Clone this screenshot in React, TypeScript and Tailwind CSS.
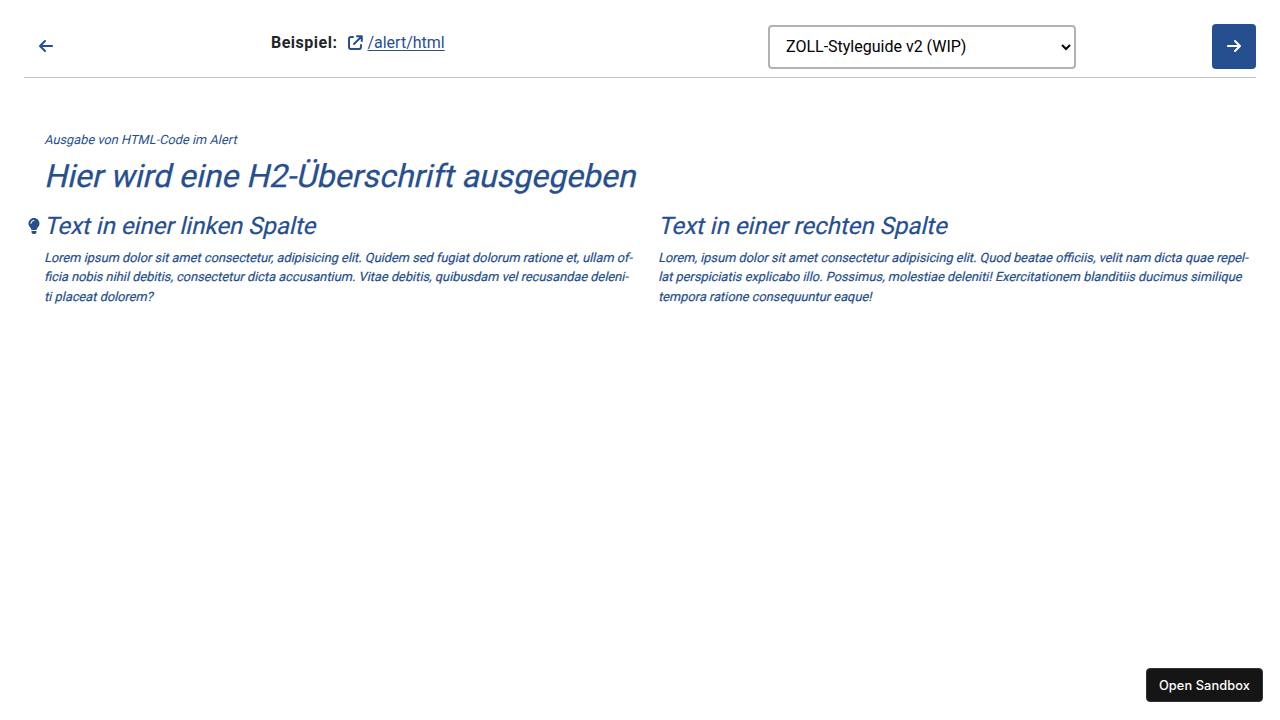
import { FaArrowLeft, FaArrowRight } from 'react-icons/fa6';
import { FaLightbulb } from 'react-icons/fa';

function Slanted({ children }: { children: string }) {
  return <span className="block w-fit origin-[0_75%] -skew-x-[13deg] whitespace-nowrap">{children}</span>;
}

function ExternalLink() {
  return (
    <svg width="15" height="15" viewBox="0 0 15 15" fill="none" stroke="currentColor" strokeWidth="2" strokeLinecap="round" strokeLinejoin="round" className="mb-px" aria-hidden="true">
      <path d="M5 2H3a2 2 0 0 0-2 2v8a2 2 0 0 0 2 2h8a2 2 0 0 0 2-2v-2M9 1.2h4.8V6M13.5 1.5 6 9" />
    </svg>
  );
}

export default function App() {
  return (
    <div className="flex h-[720px] flex-col overflow-hidden bg-white font-['Roboto',sans-serif] text-[#212529]">
      <header className="mx-6 mt-6 flex h-[54px] items-start border-b border-[#c4c4c4]">
        <button aria-label="Zurück" className="flex h-[45px] w-11 items-center justify-center pb-px text-[#264f8f]">
          <FaArrowLeft size={16} />
        </button>
        <div className="ml-[203px] flex w-[497px] items-center pt-[7px] text-base leading-6">
          <strong className="font-bold tracking-[0.5px]">Beispiel:</strong>
          <a href="#" className="ml-[11px] flex items-center gap-1 text-[#264f8f]">
            <ExternalLink />
            <span className="underline underline-offset-2">/alert/html</span>
          </a>
        </div>
        <select className="mt-px h-11 w-[308px] rounded-[4px] border-2 border-[#b2b2b2] bg-white pb-0.5 pl-3 text-base text-black">
          <option>ZOLL-Styleguide v2 (WIP)</option>
        </select>
        <button aria-label="Weiter" className="ml-auto flex h-[45px] w-11 items-center justify-center rounded-[4px] bg-[#264f8f] pb-px text-white">
          <FaArrowRight size={16} />
        </button>
      </header>
      <main className="pl-11 pr-8 pt-[52px] text-[12.8px] leading-[19.5px] text-[#264f8f]">
        <p><Slanted>Ausgabe von HTML-Code im Alert</Slanted></p>
        <h2 className="mt-[5px] text-[32px] leading-[42px] [-webkit-text-stroke:0.25px_currentColor]"><Slanted>Hier wird eine H2-Überschrift ausgegeben</Slanted></h2>
        <div className="mt-[13px] grid grid-cols-[614px_1fr]">
          <section>
            <div className="-ml-[18px] flex items-center gap-0.5">
              <FaLightbulb size={16} className="shrink-0" />
              <h3 className="text-2xl leading-8 [-webkit-text-stroke:0.2px_currentColor]"><Slanted>Text in einer linken Spalte</Slanted></h3>
            </div>
            <p className="mt-[6px] [-webkit-text-stroke:0.2px_currentColor]">
              <Slanted>Lorem ipsum dolor sit amet consectetur, adipisicing elit. Quidem sed fugiat dolorum ratione et, ullam of-</Slanted>
              <Slanted>ficia nobis nihil debitis, consectetur dicta accusantium. Vitae debitis, quibusdam vel recusandae deleni-</Slanted>
              <Slanted>ti placeat dolorem?</Slanted>
            </p>
          </section>
          <section>
            <h3 className="text-2xl leading-8 [-webkit-text-stroke:0.2px_currentColor]"><Slanted>Text in einer rechten Spalte</Slanted></h3>
            <p className="mt-[6px] [-webkit-text-stroke:0.2px_currentColor]">
              <Slanted>Lorem, ipsum dolor sit amet consectetur adipisicing elit. Quod beatae officiis, velit nam dicta quae repel-</Slanted>
              <Slanted>lat perspiciatis explicabo illo. Possimus, molestiae deleniti! Exercitationem blanditiis ducimus similique</Slanted>
              <Slanted>tempora ratione consequuntur eaque!</Slanted>
            </p>
          </section>
        </div>
      </main>
      <button className="mb-[18px] mr-[17px] mt-auto h-[34px] w-[117px] self-end rounded-[4px] border border-[#343434] bg-[#151515] pt-px font-['Inter',sans-serif] text-[12.8px] font-medium tracking-[0.1px] text-white">Open Sandbox</button>
    </div>
  );
}
